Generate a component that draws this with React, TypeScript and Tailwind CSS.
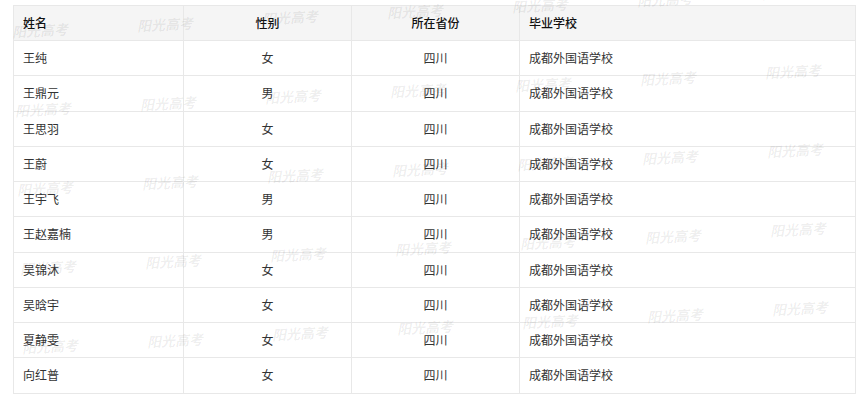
import React from "react";

const rows: [string, string][] = [
  ["王纯", "女"],
  ["王鼎元", "男"],
  ["王思羽", "女"],
  ["王蔚", "女"],
  ["王宇飞", "男"],
  ["王赵嘉楠", "男"],
  ["吴锦沐", "女"],
  ["吴晗宇", "女"],
  ["夏静雯", "女"],
  ["向红普", "女"],
];

const marks: { x: number; y: number }[] = [];
for (let b = 0; b < 5; b++) {
  for (let i = 0; i < 7; i++) {
    marks.push({ x: 12 + 125 * i + 2.5 * b, y: 30 + 79 * b - 6.3 * i });
  }
}

export default function App() {
  return (
    <div
      className="relative w-[866px] h-[400px] bg-white overflow-hidden"
      style={{ fontFamily: '"Noto Sans CJK SC", sans-serif' }}
    >
      <div className="pt-[5px] pl-[13px]">
        <table className="w-[843px] border-collapse table-fixed text-[12px] text-[#333]">
          <colgroup>
            <col className="w-[170px]" />
            <col className="w-[168px]" />
            <col className="w-[168px]" />
            <col />
          </colgroup>
          <thead>
            <tr className="h-[35px] bg-[#f5f5f5] text-[#111] font-medium">
              <th className="border border-[#e8e8e8] text-left pl-[9px] font-medium">姓名</th>
              <th className="border border-[#e8e8e8] text-center font-medium">性别</th>
              <th className="border border-[#e8e8e8] text-center font-medium">所在省份</th>
              <th className="border border-[#e8e8e8] text-left pl-[9px] font-medium">毕业学校</th>
            </tr>
          </thead>
          <tbody>
            {rows.map(([n, g], i) => (
              <tr key={i} className="h-[35.25px]">
                <td className="border border-[#e8e8e8] pl-[9px]">{n}</td>
                <td className="border border-[#e8e8e8] text-center">{g}</td>
                <td className="border border-[#e8e8e8] text-center">四川</td>
                <td className="border border-[#e8e8e8] pl-[9px]">成都外国语学校</td>
              </tr>
            ))}
          </tbody>
        </table>
      </div>
      <div className="absolute inset-0 pointer-events-none">
        {marks.map((m, i) => (
          <span
            key={i}
            className="absolute text-[14px] font-bold italic text-black/[0.07] whitespace-nowrap leading-none -rotate-3"
            style={{ left: m.x, top: m.y - 7 }}
          >
            阳光高考
          </span>
        ))}
      </div>
    </div>
  );
}
